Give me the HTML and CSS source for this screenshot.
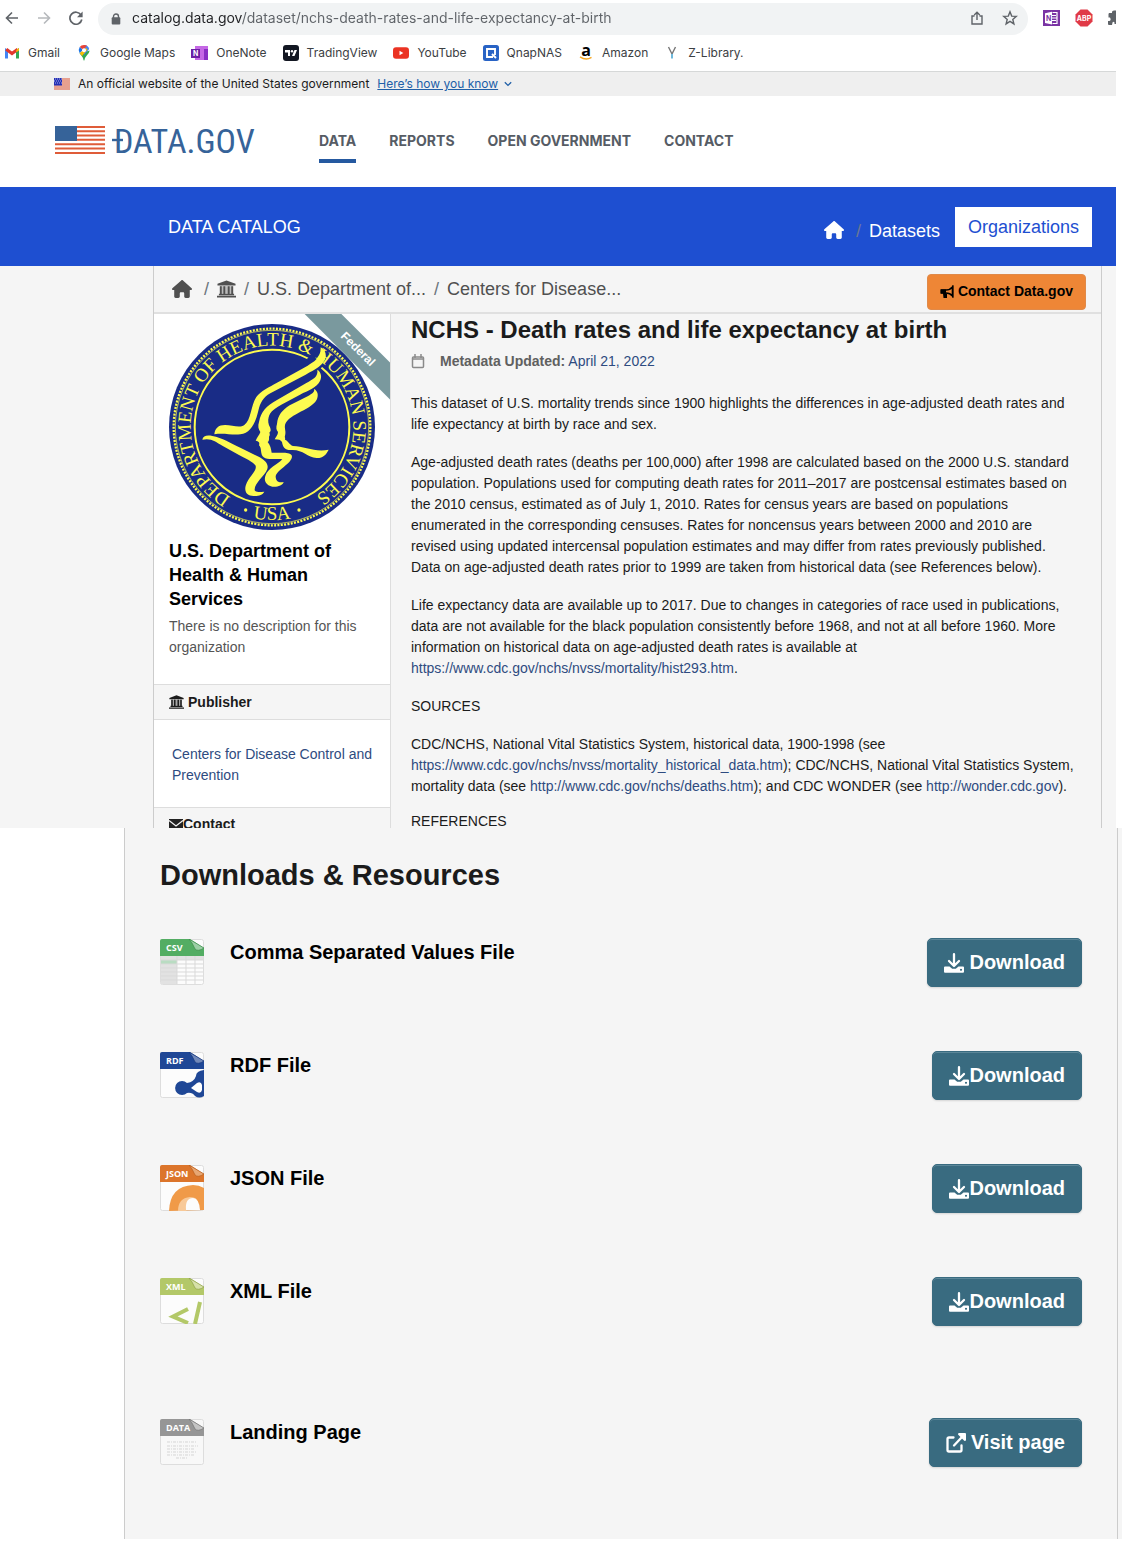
FILE: index.html
```html
<!DOCTYPE html>
<html lang="en">
<head>
<meta charset="utf-8">
<title>NCHS - Death rates and life expectancy at birth</title>
<link rel="stylesheet" href="styles.css">
</head>
<body>
<svg class="defs" width="0" height="0" aria-hidden="true">
  <symbol id="house" viewBox="0 0 576 512"><path fill="currentColor" d="M575.800 255.500c0 18-15 32.100-32 32.100h-32l.7 160.200c0 2.700-.2 5.400-.5 8.100V472c0 22.100-17.900 40-40 40H392c-22.100 0-40-17.900-40-40V384c0-17.700-14.300-32-32-32H256c-17.700 0-32 14.300-32 32v88c0 22.100-17.900 40-40 40H104c-22.100 0-40-17.900-40-40V287.600H32c-18 0-32-14-32-32.100c0-9 3-17 10-24L266.400 8c7-7 15-8 22-8s15 2 21 7L564.800 231.500c8 7 12 15 11 24z"/></symbol>
  <symbol id="bank" viewBox="0 0 20 18"><path fill="currentColor" d="M10 0l9.500 3.500v1.700H.5V3.500zM3 6h2v8H3zM6.700 6h2v8h-2zM11.300 6h2v8h-2zM15 6h2v8h-2zM2 14h16v1.500H2zM0 16.200h20V18H0z"/><path fill="currentColor" opacity=".35" d="M3 6h14v8H3z"/></symbol>
  <symbol id="download" viewBox="0 0 20 20"><path d="M10 1.200v11M5 8l5 5 5-5" fill="none" stroke="currentColor" stroke-width="2.300" stroke-linecap="round" stroke-linejoin="round"/><path fill="currentColor" fill-rule="evenodd" d="M1 13.500h4.500l2.700 2.300h3.600l2.700-2.300H19q1 0 1 1v4.300q0 1-1 1H1q-1 0-1-1v-4.300q0-1 1-1zM17 15.800a1 1 0 1 0 .01 0z"/></symbol>
  <symbol id="external" viewBox="0 0 20 20"><path d="M7.500 4.500H3q-1.500 0-1.500 1.500v11q0 1.500 1.500 1.500h11q1.500 0 1.500-1.500v-4.500M8 12.500l8-8.500" fill="none" stroke="currentColor" stroke-width="2.300" stroke-linecap="round"/><path fill="currentColor" d="M12.500 0H19q1 0 1 1v6.500l-1.500.5-6.500-6.500z"/></symbol>
</svg>

<div class="site">
  <header class="browser">
    <div class="toolbar">
      <button class="tool" aria-label="Back"><svg width="14" height="14" viewBox="0 0 14 14"><path d="M13 7H1.500M7 1.500L1.500 7 7 12.500" fill="none" stroke="#5f6368" stroke-width="1.600"/></svg></button>
      <button class="tool" aria-label="Forward"><svg width="14" height="14" viewBox="0 0 14 14"><path d="M1 7h11.500M7 1.500L12.500 7 7 12.500" fill="none" stroke="#b6b9bc" stroke-width="1.600"/></svg></button>
      <button class="tool" aria-label="Reload"><svg width="14" height="14" viewBox="0 0 14 14"><path d="M12 4A6 6 0 1 0 12.800 8.500" fill="none" stroke="#5f6368" stroke-width="1.700"/><path d="M13.600.5v5.700H8z" fill="#5f6368"/></svg></button>
      <div class="address">
        <svg width="10" height="12" viewBox="0 0 10 12"><path d="M2.500 5V3.500a2.500 2.500 0 0 1 5 0V5" fill="none" stroke="#5f6368" stroke-width="1.400"/><rect x=".7" y="4.300" width="8.600" height="7.200" rx="1" fill="#5f6368"/></svg>
        <input class="url" type="text" aria-label="Address" value="catalog.data.gov/dataset/nchs-death-rates-and-life-expectancy-at-birth">
        <button class="tool" aria-label="Share"><svg width="14" height="14" viewBox="0 0 14 14"><path d="M4.500 5H2v8h10V5H9.500M7 9V1.500M4.200 4L7 1.300 9.800 4" fill="none" stroke="#5f6368" stroke-width="1.400"/></svg></button>
        <button class="tool" aria-label="Bookmark this page"><svg width="16" height="16" viewBox="0 0 16 16"><path d="M8 1.800l1.700 4.300 4.600.3-3.500 3 1.100 4.500L8 11.400l-3.900 2.500 1.100-4.500-3.500-3 4.600-.3z" fill="none" stroke="#5f6368" stroke-width="1.400"/></svg></button>
      </div>
      <div class="extensions">
        <button class="tool" aria-label="OneNote clipper"><svg width="17" height="16" viewBox="0 0 17 16"><path fill="#7a34a4" d="M0 0h17v16H0z"/><path d="M9.500 2.500H14v11H9.500M9 5.500h4M9 8h5M9 10.500h4" stroke="#fff" stroke-width="1.200" fill="none"/><path fill="#fff" d="M2 3.300l7-1.600v12.800l-7-1.600z"/><text x="3" y="10.500" class="tiny" fill="#7a34a4">N</text></svg></button>
        <button class="tool" aria-label="Adblock Plus"><svg width="18" height="18" viewBox="0 0 18 18"><path fill="#e03a47" d="M5.500.5h7l5 5v7l-5 5h-7l-5-5v-7z"/><text x="9" y="12" text-anchor="middle" class="tiny" fill="#fff">ABP</text></svg></button>
        <button class="tool" aria-label="Extensions"><svg width="8" height="16" viewBox="0 0 8 16"><path fill="#5f6368" d="M1 3h3V2q0-1.500 2-1.500h2V14H6.500v-1.500Q5.500 11 4.500 12.500L4 15H1q-1 0-1-1v-3h1.500Q3.500 10 2 7.500H.5V4z"/></svg></button>
      </div>
    </div>
    <nav class="bookmarks" aria-label="Bookmarks">
      <a href="#"><svg width="16" height="16" viewBox="0 0 16 16"><path fill="#4285f4" d="M1 3l3 2v8.500H1z"/><path fill="#34a853" d="M12 5l3-2v10.500h-3z"/><path d="M2.300 4.200L8 8.600l5.700-4.400" fill="none" stroke="#e2382c" stroke-width="3.200"/><path fill="#fbbc04" d="M12.300 5l2.700-2v2.500l-2.700 1.700z"/></svg>Gmail</a>
      <a href="#"><svg width="16" height="16" viewBox="0 0 16 16"><path fill="#34a853" d="M3.500 8C5 11 7 11.500 7.500 15q.5 1 1 0C9 11 13.500 9 13.500 5.500L9 7z"/><path fill="#4285f4" d="M8 0q4 0 5.200 4L8 10z"/><path fill="#ea4335" d="M8 0Q5 0 3.700 2L7 5l4-4.500Q9.500 0 8 0z"/><path fill="#fbbc04" d="M3.700 8L10 3l1.500 1.500L6 11z"/><path fill="#1a73e8" d="M3.700 2Q2 4.500 3.500 8L7 5z"/><circle cx="8" cy="5.300" r="2" fill="#fff"/></svg>Google Maps</a>
      <a href="#"><svg width="17" height="16" viewBox="0 0 17 16"><path fill="#c568e5" d="M4 1h13v14H4z"/><path fill="#8a2fc4" d="M13 4h4v11h-4z"/><path fill="#6d20a5" d="M0 4h9v9H0z"/><text x="2" y="11" class="tiny" fill="#fff">N</text></svg>OneNote</a>
      <a href="#"><svg width="16" height="16" viewBox="0 0 16 16"><rect width="16" height="16" rx="3" fill="#131722"/><path fill="#fff" d="M2 5h5v6H5V7.500H2zM11.500 5H14l-2.500 6H9z"/><circle cx="9" cy="6.200" r="1.200" fill="#fff"/></svg>TradingView</a>
      <a href="#"><svg width="16" height="16" viewBox="0 0 16 16"><rect y="2.300" width="16" height="11.500" rx="3" fill="#eb3323"/><path fill="#fff" d="M6.500 5.800v4.500L10.300 8z"/></svg>YouTube</a>
      <a href="#"><svg width="16" height="16" viewBox="0 0 16 16"><rect width="16" height="16" rx="2.500" fill="#2863c5"/><path d="M10 12H4V4h8v6M9 9l4 4" fill="none" stroke="#fff" stroke-width="1.900"/></svg>QnapNAS</a>
      <a href="#"><svg class="open" width="16" height="16" viewBox="0 0 16 16"><text x="8" y="10.500" text-anchor="middle" class="amazon">a</text><path d="M2 11.800q6 4 11.500.5" fill="none" stroke="#f5a623" stroke-width="1.400"/></svg>Amazon</a>
      <a href="#"><svg width="16" height="16" viewBox="0 0 16 16"><path d="M4.500 2L8 9l3.500-7" fill="none" stroke="#777" stroke-width="1.400"/><path d="M8 9v4.500" stroke="#6fb9dc" stroke-width="2"/></svg>Z-Library.</a>
    </nav>
  </header>

  <div class="banner">
    <svg width="16" height="12" viewBox="0 0 16 12"><path fill="#e6a08f" d="M0 0h16v12H0z"/><path fill="#2530b5" d="M0 0h8v7.500H0z"/><path d="M1 1h7M0 3h7M1 5h7" stroke="#aab0e8" stroke-width="1" stroke-dasharray="1 1"/></svg>
    <span>An official website of the United States government</span>
    <button class="how"><u>Here’s how you know</u><svg width="8" height="6" viewBox="0 0 8 6"><path d="M.8 1.200L4 4.400l3.200-3.200" fill="none" stroke="#2160a8" stroke-width="1.300"/></svg></button>
  </div>

  <header class="masthead">
    <a class="logo" href="#" aria-label="Data.gov">
      <svg class="open" width="202" height="32" viewBox="0 0 202 32">
        <path d="M0 2h50M0 6.200h50M0 10.500h50M0 14.800h50M0 19.200h50M0 23.500h50M0 28h50" stroke="#df5c39" stroke-width="2.100"/>
        <path fill="#366399" d="M0 1h22v15H0z"/>
        <path d="M57 15h11" stroke="#366399" stroke-width="2.400"/>
        <text x="59" y="28" class="wordmark">DATA.GOV</text>
      </svg>
    </a>
    <nav class="sections">
      <a class="current" href="#">DATA</a>
      <a href="#">REPORTS</a>
      <a href="#">OPEN GOVERNMENT</a>
      <a href="#">CONTACT</a>
    </nav>
  </header>

  <div class="catalog">
    <a class="catalog-title" href="#">DATA CATALOG</a>
    <nav class="catalog-nav">
      <a class="home" href="#" aria-label="Home"><svg width="20" height="18"><use href="#house"/></svg></a>
      <span class="slash">/</span>
      <a class="datasets" href="#">Datasets</a>
      <a class="orgs" href="#">Organizations</a>
    </nav>
  </div>

  <div class="backdrop">
    <div class="wrapper">
      <div class="crumbbar">
        <nav class="crumbs" aria-label="Breadcrumb">
          <a class="crumb-home" href="#" aria-label="Home"><svg width="20" height="18"><use href="#house"/></svg></a><span class="sep">/</span>
          <a href="#" aria-label="Organizations"><svg width="19" height="18"><use href="#bank"/></svg></a><span class="sep">/</span>
          <a href="#">U.S. Department of...</a><span class="sep">/</span>
          <a href="#">Centers for Disease...</a>
        </nav>
        <button class="contact"><svg width="14" height="14" viewBox="0 0 14 14"><path d="M1.500 5h4.500q4 0 6.500-3v9q-2.500-3-6.500-3H1.500z" fill="none" stroke="#000" stroke-width="1.600"/><path d="M.5 4.500H6v4h1V13H3.500L3 8.500H.5zM12 .5h1.500v12H12z"/></svg>Contact Data.gov</button>
      </div>
      <div class="columns">
        <aside class="side">
          <section class="org">
            <div class="ribbon"><span>Federal</span></div>
            <svg class="seal" viewBox="41 42 618 618" role="img" aria-label="Department of Health and Human Services seal">
              <defs><path id="ring" d="M260.600 578A244 244 0 1 1 447.300 574.800"/><path id="foot" d="M210 592.600A279 279 0 0 0 490 592.600"/></defs>
              <circle cx="350" cy="351" r="309" fill="#192c86"/>
              <circle cx="350" cy="351" r="295" fill="none" stroke="#fdfb50" stroke-width="7" stroke-dasharray="6 4"/>
              <circle cx="350" cy="351" r="290" fill="none" stroke="#fdfb50" stroke-width="2"/>
              <circle cx="350" cy="351" r="232" fill="none" stroke="#fdfb50" stroke-width="6"/>
              <path d="M462 140l34 35" stroke="#192c86" stroke-width="22"/>
              <text class="sealtext" text-anchor="middle"><textPath href="#ring" startOffset="50%">DEPARTMENT OF HEALTH &amp; HUMAN SERVICES</textPath></text>
              <text class="sealtext" text-anchor="middle"><textPath href="#foot" startOffset="50%">USA</textPath></text>
              <circle cx="271" cy="600" r="5" fill="#fdfb50"/><circle cx="431" cy="600" r="5" fill="#fdfb50"/>
              <g fill="#fdfb50">
                <path d="M496 112c12 6 17 18 15 30c-4 22-30 36-60 52L345 250c-22 12-30 28-36 52c-8 34-22 68-54 71c-26 3-50-5-78 0c2-18 12-28 32-28c22 0 44 10 58 0c20-14 20-60 36-84c12-18 40-30 62-43l92-51c20-12 40-24 39-55z"/>
                <path d="M486 179c12 8 14 22 8 34c-9 20-35 28-60 41l-52 28c-22 12-38 22-42 40c-3 10-1 22 4 30c3 8 3 12-2 16c2 4 2 8-1 12c1 10-1 14-4 16c8 10 10 20 12 32c22 2 52-4 60 8c8 20-42 42-48 62c0 18 10 20 24 18c-2 10-20 16-34 14c-18-4-26-16-21-32c8-24 36-34 51-50c-14-4-42 4-56-6c-12-10-4-26-14-36c2-6 2-12-10-14c4-10 12-18 14-26c-6-8-8-18-4-30c6-32 22-48 54-66l88-51c20-12 36-18 33-40z"/>
                <path d="M476 237c12 6 14 20 8 32c-10 18-34 28-55 40c-22 12-35 20-40 36c-2 12 4 20 0 32c-2 4 2 8 0 12c10 4 12 14 24 19c34 0 66 20 107 11c-8 16-18 26-36 25c-28-2-40-24-72-24c-24 2-30-10-32-24c-4-6-10-8-22-8c4-8 10-14 10-22c-6-6-6-14-3-24c2-26 16-42 38-56l54-27c12-8 22-12 19-22z"/>
                <path d="M141 389c2-12 14-14 30-11c30 5 54 22 84 35l52 26c20 10 34 22 29 38c-8 22-40 42-38 64c4 8 16 4 29 4c-6 12-22 14-38 12c-16-2-22-14-18-30c8-28 34-42 30-60c-8-12-32-22-50-32l-50-28c-20-12-34-24-60-18z"/>
              </g>
            </svg>
            <h2>U.S. Department of Health &amp; Human Services</h2>
            <p>There is no description for this organization</p>
          </section>
          <h3 class="side-heading"><svg width="15" height="14"><use href="#bank"/></svg><span>Publisher</span></h3>
          <p class="publisher"><a href="#">Centers for Disease Control and Prevention</a></p>
          <h3 class="side-heading cut"><svg width="14" height="12" viewBox="0 0 14 12"><path fill="#222" d="M0 0h14v12H0z"/><path d="M0 1.500l7 5.500 7-5.500" fill="none" stroke="#f5f5f5" stroke-width="1.300"/></svg>Contact</h3>
        </aside>
        <main class="article">
          <h1>NCHS - Death rates and life expectancy at birth</h1>
          <p class="meta"><svg width="14" height="15" viewBox="0 0 14 15"><path d="M2.500 3h9q1 0 1 1v8.500q0 1-1 1h-9q-1 0-1-1V4q0-1 1-1zM1 5h12M4 0v4M10 0v4" fill="none" stroke="#8a8a8a" stroke-width="1.500"/></svg><span><strong>Metadata Updated:</strong> <a href="#">April 21, 2022</a></span></p>
          <p>This dataset of U.S. mortality trends since 1900 highlights the differences in age-adjusted death rates and life expectancy at birth by race and sex.</p>
          <p>Age-adjusted death rates (deaths per 100,000) after 1998 are calculated based on the 2000 U.S. standard population. Populations used for computing death rates for 2011–2017 are postcensal estimates based on the 2010 census, estimated as of July 1, 2010. Rates for census years are based on populations enumerated in the corresponding censuses. Rates for noncensus years between 2000 and 2010 are revised using updated intercensal population estimates and may differ from rates previously published. Data on age-adjusted death rates prior to 1999 are taken from historical data (see References below).</p>
          <p>Life expectancy data are available up to 2017. Due to changes in categories of race used in publications, data are not available for the black population consistently before 1968, and not at all before 1960. More information on historical data on age-adjusted death rates is available at <a href="#">https://www.cdc.gov/nchs/nvss/mortality/hist293.htm</a>.</p>
          <p>SOURCES</p>
          <p>CDC/NCHS, National Vital Statistics System, historical data, 1900-1998 (see <a href="#">https://www.cdc.gov/nchs/nvss/mortality_historical_data.htm</a>); CDC/NCHS, National Vital Statistics System, mortality data (see <a href="#">http://www.cdc.gov/nchs/deaths.htm</a>); and CDC WONDER (see <a href="#">http://wonder.cdc.gov</a>).</p>
          <p>REFERENCES</p>
        </main>
      </div>
    </div>
  </div>
</div>

<section class="downloads">
  <div class="panel">
    <h2>Downloads &amp; Resources</h2>
    <ul>
      <li>
        <svg class="file" viewBox="0 0 44 46"><rect x=".5" y=".5" width="43" height="45" rx="2" fill="#fcfcfc" stroke="#ddd"/><path fill="#e2e2e2" d="M1 17h42v4H1zM1 21h16v24H1z"/><path fill="#b9dcc2" d="M1 21h16v4H1z"/><path d="M1 21h42M1 25h42M1 29h42M1 33h42M1 37h42M1 41h42M17 17v28M26 17v28M35 17v28" stroke="#d9d9d9"/><path fill="#53ad63" d="M2 0h28l14 9v8H0V2q0-2 2-2z"/><path fill="#9ccfa6" stroke="#3f8e4e" stroke-width=".7" d="M29 0q3 3 6 10 3 3 9-1z"/><text x="6" y="12" class="kind">CSV</text></svg>
        <h3><a href="#">Comma Separated Values File</a></h3>
        <button class="action spaced"><svg width="20" height="20"><use href="#download"/></svg>Download</button>
      </li>
      <li>
        <svg class="file" viewBox="0 0 44 46"><rect x=".5" y=".5" width="43" height="45" rx="2" fill="#fcfcfc" stroke="#ddd"/><path fill="#1f4796" d="M44 18v26q-5 3-9 0-3-4-8-3a7 7 0 1 1 0-10q7-1 9-7 0-5 8-6z"/><path fill="#fff" d="M31 36l6-5q4-2 5 2v5q-1 4-5 2z"/><path fill="#1f4796" d="M2 0h28l14 9v8H0V2q0-2 2-2z"/><path fill="#7289b9" stroke="#183a80" stroke-width=".7" d="M29 0q3 3 6 10 3 3 9-1z"/><text x="6" y="12" class="kind">RDF</text></svg>
        <h3><a href="#">RDF File</a></h3>
        <button class="action"><svg width="20" height="20"><use href="#download"/></svg>Download</button>
      </li>
      <li>
        <svg class="file" viewBox="0 0 44 46"><rect x=".5" y=".5" width="43" height="45" rx="2" fill="#fcfcfc" stroke="#ddd"/><path fill="#f09a48" d="M9 46q1-25 24-26 6 0 11 3v22z"/><path fill="#f8c998" d="M18 46q0-13 12-14 5 0 7 3L26 46z"/><path fill="#fcfcfc" d="M26 45q-1-12 7-12 6 0 7 12z"/><path fill="#dc752b" d="M2 0h28l14 9v8H0V2q0-2 2-2z"/><path fill="#e7a673" stroke="#b9601f" stroke-width=".7" d="M29 0q3 3 6 10 3 3 9-1z"/><text x="6" y="12" class="kind">JSON</text></svg>
        <h3><a href="#">JSON File</a></h3>
        <button class="action"><svg width="20" height="20"><use href="#download"/></svg>Download</button>
      </li>
      <li class="last-file">
        <svg class="file" viewBox="0 0 44 46"><rect x=".5" y=".5" width="43" height="45" rx="2" fill="#fcfcfc" stroke="#ddd"/><path d="M28 31l-15 7.500L28 45M40 24l-5 22" fill="none" stroke="#b3c868" stroke-width="4"/><path fill="#b3c868" d="M2 0h28l14 9v8H0V2q0-2 2-2z"/><path fill="#d6e0a8" stroke="#8fa24c" stroke-width=".7" d="M29 0q3 3 6 10 3 3 9-1z"/><text x="6" y="12" class="kind">XML</text></svg>
        <h3><a href="#">XML File</a></h3>
        <button class="action"><svg width="20" height="20"><use href="#download"/></svg>Download</button>
      </li>
      <li>
        <svg class="file" viewBox="0 0 44 46"><rect x=".5" y=".5" width="43" height="45" rx="2" fill="#f8f8f8" stroke="#ddd"/><path d="M7 23h30M7 27h31M7 30h28M7 33h30M7 36h27M16 39h12" stroke="#d5d5d5" stroke-dasharray="3 1 1 1"/><path fill="#969696" d="M2 0h28l14 9v8H0V2q0-2 2-2z"/><path fill="#c4c4c4" stroke="#777" stroke-width=".7" d="M29 0q3 3 6 10 3 3 9-1z"/><text x="6" y="12" class="kind">DATA</text></svg>
        <h3><a href="#">Landing Page</a></h3>
        <button class="action spaced"><svg width="20" height="20"><use href="#external"/></svg>Visit page</button>
      </li>
    </ul>
  </div>
</section>
</body>
</html>
```
FILE: styles.css
```css
* { box-sizing: border-box; }
body {
  margin: 0;
  background: #fff;
  color: #1b1b1b;
  font: 14px/21px "Liberation Sans", Arial, sans-serif;
}
h1, h2, h3, p, ul { margin: 0; padding: 0; }
a { color: #2e4b80; text-decoration: none; }
button { border: 0; background: none; padding: 0; font: inherit; color: inherit; cursor: pointer; }
svg { flex: none; display: block; }
.open { overflow: visible; }
.defs { position: absolute; }
.site { margin-right: 16px; }

/* Browser chrome */
.browser { font-family: Inter, sans-serif; border-bottom: 1px solid #d6d8d8; overflow: hidden; }
.toolbar { display: flex; align-items: center; gap: 18px; padding: 3px 0 0 5px; }
.tool { padding-bottom: 2px; }
.address {
  flex: 1;
  display: flex;
  align-items: center;
  gap: 18px;
  height: 32px;
  margin-left: -3px;
  padding: 0 10px 0 13px;
  border-radius: 16px;
  background: #f1f3f4;
}
.url {
  flex: 1;
  min-width: 0;
  margin-left: -7px;
  padding: 0 0 2px;
  border: 0;
  outline: 0;
  font: 14px/20px Inter, sans-serif;
  color: #5f6368;
  background: linear-gradient(90deg, #202124 110px, #5f6368 110px);
  -webkit-background-clip: text;
  background-clip: text;
  -webkit-text-fill-color: transparent;
}
.extensions { display: flex; align-items: center; gap: 15px; margin-left: -3px; }
.tiny { font: bold 7px Inter, sans-serif; }
.amazon { font: bold 16px "Open Sans", sans-serif; }
.bookmarks { display: flex; align-items: center; gap: 16px; height: 36px; padding-left: 4px; }
.bookmarks a { display: flex; align-items: center; gap: 8px; color: #3c4043; font-size: 12px; line-height: 16px; }

/* Government banner and masthead */
.banner {
  display: flex;
  align-items: center;
  gap: 8px;
  height: 24px;
  padding-left: 54px;
  background: #efefef;
  font: 12px/24px Inter, sans-serif;
}
.how { display: flex; align-items: center; gap: 6px; color: #2160a8; }
.masthead { display: flex; gap: 62px; height: 91px; padding: 29px 0 0 55px; }
.wordmark { font: 34px "Liberation Sans Narrow", "Roboto Condensed", Roboto, sans-serif; fill: #366399; }
.sections { display: flex; align-items: flex-start; gap: 33px; padding-top: 5px; }
.sections a { color: #565c65; font: 700 14px/21px Inter, sans-serif; padding-bottom: 8px; }
.sections .current { border-bottom: 4px solid #2559a0; }

/* Catalog bar */
.catalog {
  display: flex;
  justify-content: space-between;
  align-items: flex-start;
  padding: 20px 24px 15px 168px;
  background: #1e4fd1;
  font-size: 18px;
  line-height: 40px;
}
.catalog a { color: #fff; }
.catalog-nav { display: flex; align-items: flex-start; }
.slash { color: #6a7794; margin: 4px 8px 0 12px; }
.datasets { margin-top: 4px; }
.home { margin-top: 14px; }
.catalog .orgs { margin-left: 15px; padding: 0 13px; background: #fff; color: #1e4fd1; }

/* Dataset page */
.backdrop { padding: 0 14px 0 153px; background: #f5f5f5; }
.wrapper { border: 1px solid #ccc; border-width: 0 1px; }
.crumbbar {
  display: flex;
  justify-content: space-between;
  align-items: center;
  height: 48px;
  padding: 0 15px 0 18px;
  border-bottom: 2px solid #e0e0e0;
}
.crumbs { display: flex; align-items: center; font-size: 18px; }
.crumbs a { color: #505050; white-space: nowrap; }
.crumbs .crumb-home { margin-right: 4px; }
.sep { width: 5px; margin: 0 8px; color: #6c757d; }
.contact {
  display: flex;
  align-items: center;
  gap: 4px;
  height: 36px;
  margin-top: 5px;
  padding: 0 12px;
  border: 1px solid #e08a4a;
  border-radius: 4px;
  background: #ee8636;
  color: #000;
  font-weight: bold;
}
.columns { display: flex; }
.side { width: 237px; flex: none; background: #fff; border-right: 1px solid #ddd; }
.org { position: relative; height: 370px; padding: 10px 15px; overflow: hidden; }
.seal { width: 206px; height: 206px; margin-bottom: 9px; }
.sealtext { font: 57px "Liberation Serif", serif; fill: #fdfb50; }
.org h2 { font-size: 18px; line-height: 24px; margin-bottom: 5px; color: #000; }
.org p { color: #555; }
.ribbon {
  position: absolute;
  top: 22px;
  right: -43px;
  width: 150px;
  line-height: 26px;
  background: #7a999e;
  color: #fff;
  font-size: 12px;
  font-weight: bold;
  text-align: center;
  transform: rotate(45deg);
}
.side-heading {
  display: flex;
  align-items: center;
  gap: 4px;
  height: 36px;
  padding-left: 15px;
  border: 1px solid #ddd;
  border-width: 1px 0;
  background: #f5f5f5;
  font-size: 14px;
}
.side-heading.cut { height: 21px; gap: 0; align-items: flex-start; padding-top: 6px; border-bottom: 0; overflow: hidden; }
.side-heading.cut svg { margin-top: 5px; }
.publisher { padding: 24px 15px 21px 18px; }
.article { flex: 1; padding: 2px 24px 0 20px; }
.article h1 { font-size: 24px; line-height: 28px; margin-bottom: 7px; }
.article p { margin-bottom: 17px; }
.article .meta { display: flex; align-items: center; gap: 15px; margin-bottom: 21px; color: #606060; }
.article p:last-child { margin-bottom: 0; line-height: 14px; }

/* Downloads */
.downloads { margin: 0 10px 10px 124px; padding-right: 4px; background: #f5f5f5; }
.panel { padding: 29px 35px 8px; border: 1px solid #ccc; border-width: 0 1px; }
.panel h2 { font-size: 29px; line-height: 36px; margin-bottom: 45px; }
.panel ul { list-style: none; }
.panel li { display: flex; align-items: flex-start; padding-bottom: 64px; }
.panel .last-file { padding-bottom: 92px; }
.file { width: 44px; height: 46px; margin: 1px 26px 0 0; }
.kind { font: bold 9px "Open Sans", sans-serif; fill: #fff; }
.panel h3 { flex: 1; font-size: 20px; line-height: 28px; }
.panel h3 a { color: #000; }
.action {
  display: flex;
  align-items: center;
  height: 49px;
  padding: 0 16px;
  border: 1px solid #396b80;
  border-radius: 5px;
  background: #396b80;
  box-shadow: inset 0 1px 0 #5c8799, 0 1px 2px #0002;
  color: #fff;
  font-size: 20px;
  font-weight: bold;
}
.spaced { gap: 5px; }
```
